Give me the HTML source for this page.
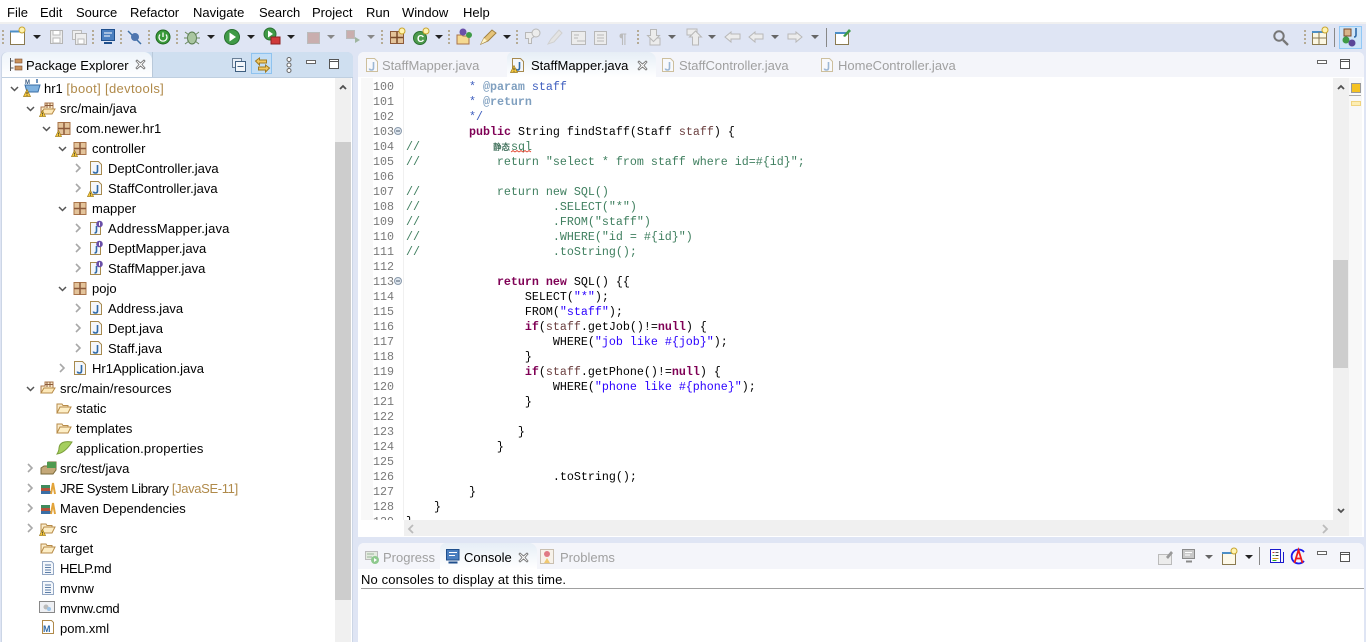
<!DOCTYPE html>
<html>
<head>
<meta charset="utf-8">
<title>Eclipse</title>
<style>
html,body{margin:0;padding:0;width:1366px;height:642px;overflow:hidden;background:#dfe5f4;font-family:"Liberation Sans","Noto Sans CJK SC",sans-serif;font-size:13px;color:#000}
div,span.a,svg.a{position:absolute}
.t{position:absolute;white-space:pre;height:20px;line-height:20px}
.g{color:#a0a0a0}
.d{color:#b08a4a}
.c{position:absolute;white-space:pre;font-family:"Liberation Mono",monospace;font-size:11.67px;line-height:15px;height:15px;left:406px;color:#000}
.n{position:absolute;white-space:pre;font-family:"Liberation Mono",monospace;font-size:11.67px;line-height:15px;height:15px;left:373px;color:#787878}
.k{color:#7f0055;font-weight:bold}
.s{color:#2a00ff}
.m{color:#3f7f5f}
.j{color:#3f5fbf}
.h{color:#7f9fbf;font-weight:bold}
.v{color:#6a3e3e}
svg{overflow:visible}
</style>
</head>
<body>
<svg width="0" height="0" style="position:absolute">
<defs>
<symbol id="jf" viewBox="0 0 16 16"><path d="M2.500 1.500h8l3 3v10h-11z" fill="#f4f7fb" stroke="#a78a4e"/><path d="M9.500 5v6q0 2-2 2t-2-1.500" fill="none" stroke="#2f6aa8" stroke-width="1.600"/></symbol>
<symbol id="jg" viewBox="0 0 16 16"><path d="M2.500 1.500h8l3 3v10h-11z" fill="#f8f9fc" stroke="#cdbf9d"/><path d="M9.500 5v6q0 2-2 2t-2-1.500" fill="none" stroke="#9db7d4" stroke-width="1.600"/></symbol>
<symbol id="pk" viewBox="0 0 16 16"><path d="M2 2.500h12v12H2z" fill="#e3c39a" stroke="#a9744a"/><path d="M8 2.500v12M2 8.500h12" stroke="#8c5a3a" stroke-width="1.500"/></symbol>
<symbol id="wr" viewBox="0 0 8 8"><path d="M4 .5l3.500 7H.5z" fill="#f7c83c" stroke="#9a7a1e" stroke-width=".7"/><path d="M4 3v2.300M4 6v.8" stroke="#333" stroke-width=".9"/></symbol>
<symbol id="fo" viewBox="0 0 16 16"><path d="M1 13V4h5l1 1.500h5V8" fill="#fbeccb" stroke="#b78b48"/><path d="M1 13l3-6h11l-3 6z" fill="#fdeec6" stroke="#b78b48"/></symbol>
<symbol id="pf" viewBox="0 0 16 16"><path d="M1 13V6h4V2h8v6" fill="#fbeccb" stroke="#a9744a"/><path d="M7 2v5M10 2v5M5 4.500h8" stroke="#8c5a3a"/><path d="M1 13l3-5h11l-3 5z" fill="#fde8b8" stroke="#b78b48"/></symbol>
<symbol id="if" viewBox="0 0 16 16"><path d="M2.500 2.500h10v12h-10z" fill="#f4f7fb" stroke="#a78a4e"/><path d="M8.500 6v5q0 2-2 2" fill="none" stroke="#2f6aa8" stroke-width="1.600"/><circle cx="11.500" cy="4" r="3.300" fill="#6a4fa8"/><path d="M11.500 2.300v3.400" stroke="#fff"/></symbol>
<symbol id="lib" viewBox="0 0 16 16"><path d="M1 5h9v3H1z" fill="#3f8a5c"/><path d="M1 8h9v3H1z" fill="#b5533c"/><path d="M1 11h10v3H1z" fill="#3a6ea5"/><path d="M11 14l2-11 2 11" fill="none" stroke="#e3a43a" stroke-width="2"/></symbol>
<symbol id="tx" viewBox="0 0 16 16"><path d="M2.500 1.500h9l2 2v11h-11z" fill="#f4f7fb" stroke="#94a8c4"/><path d="M5 5h6M5 7.500h6M5 10h6M5 12.500h6" stroke="#5c7ea8"/></symbol>
<symbol id="dd" viewBox="0 0 8 4"><path d="M0 0h8L4 4z"/></symbol>
<symbol id="x" viewBox="0 0 11 11"><path d="M2 1l3.500 3L9 1l1 1-3 3.500 3 3.500-1 1-3.500-3-3.500 3-1-1 3-3.500-3-3.500z" fill="#fff" stroke="#777" stroke-width=".9"/></symbol>
<symbol id="min" viewBox="0 0 10 4"><rect x=".5" y=".5" width="9" height="3" fill="#fff" stroke="#666"/></symbol>
<symbol id="max" viewBox="0 0 10 10"><rect x=".5" y=".5" width="9" height="9" fill="#fff" stroke="#555"/><path d="M0 2.500h10" stroke="#555"/></symbol>
</defs>
</svg>

<!-- menu -->
<div style="left:0;top:0;width:1366px;height:22px;background:#fff"></div>
<div style="left:0;top:22px;width:1366px;height:2px;background:#f0f0f0"></div>
<span class="t" style="left:7px;top:3px">File</span>
<span class="t" style="left:40px;top:3px">Edit</span>
<span class="t" style="left:76px;top:3px">Source</span>
<span class="t" style="left:130px;top:3px">Refactor</span>
<span class="t" style="left:193px;top:3px">Navigate</span>
<span class="t" style="left:259px;top:3px">Search</span>
<span class="t" style="left:312px;top:3px">Project</span>
<span class="t" style="left:366px;top:3px">Run</span>
<span class="t" style="left:402px;top:3px">Window</span>
<span class="t" style="left:463px;top:3px">Help</span>

<!-- toolbar icons -->
<svg class="a" style="left:0;top:24px" width="1366" height="28">
<g stroke="#b5ab95" stroke-width="2" stroke-dasharray="2 2"><path d="M3 6v15M93 6v15M121 6v15M149 6v15M177 6v15M382 6v15M449 6v15M517 6v15M638 6v15M1305 6v15"/></g>
<path d="M826.500 4v19M1334.500 4v19" stroke="#888"/>
<!-- new -->
<path d="M10.500 7.500h14v13h-14z" fill="#fff" stroke="#8a7a50"/><path d="M10 7.500h14" stroke="#4d8fc7" stroke-width="2"/><circle cx="22" cy="6" r="3" fill="#fff3b0" stroke="#c8a52e"/>
<!-- save -->
<path d="M50.500 6.500h12v13h-12z" fill="#eee" stroke="#b4b4b4"/><path d="M53 7v4h7V7M53 14h7v5h-7z" fill="#fff" stroke="#bbb"/>
<path d="M72.500 6.500h9v9h-9z" fill="#eee" stroke="#bbb"/><path d="M75.500 9.500h11v11h-11z" fill="#eee" stroke="#b4b4b4"/><path d="M78 15h6v5h-6z" fill="#fff" stroke="#bbb"/>
<!-- console -->
<path d="M101.500 5.500h13v11h-13z" fill="#4a7fc0" stroke="#1f4f8c"/><path d="M104 9h8M104 12h6" stroke="#fff"/><path d="M104 19h8" stroke="#1f4f8c" stroke-width="2"/>
<!-- skip -->
<path d="M128 7l13 13" stroke="#3c6ea5" stroke-width="1.500"/><circle cx="135" cy="13" r="4" fill="#4f76b0"/>
<!-- spring -->
<circle cx="163" cy="13" r="7" fill="#3a9a3a" stroke="#206620"/><path d="M160 10.500a4 4 0 1 0 6 0M163 8.500v4.500" fill="none" stroke="#fff" stroke-width="1.300"/>
<!-- bug -->
<ellipse cx="192" cy="14" rx="4.500" ry="6" fill="#a9c6a0" stroke="#55794c"/><path d="M185 8l4 3M199 8l-4 3M184 14h4M200 14h-4M185 20l4-3M199 20l-4-3" stroke="#6b8a5e"/>
<!-- run -->
<circle cx="232" cy="13" r="7.500" fill="#3f9a46" stroke="#2a7030"/><path d="M229.500 8.500l6.500 4.500-6.500 4.500z" fill="#fff"/>
<circle cx="270" cy="10" r="6" fill="#3f9a46" stroke="#2a7030"/><path d="M268 6.500l5 3.500-5 3.500z" fill="#fff"/><rect x="271" y="13" width="9" height="7" fill="#d03a3a" stroke="#8c2020"/>
<!-- stop -->
<rect x="307.500" y="8.500" width="12" height="11" fill="#c9aeae" stroke="#bbb"/>
<rect x="346.500" y="6.500" width="8" height="8" fill="#c9aeae" stroke="#bbb"/><path d="M355 13l5 3-5 3z" fill="#9fb59f"/>
<!-- new pkg -->
<rect x="390.500" y="7.500" width="13" height="12" fill="#e3c39a" stroke="#8c5a3a"/><path d="M397 8v11M391 13.500h12" stroke="#7a4a2a" stroke-width="1.500"/><circle cx="402" cy="7" r="3" fill="#fff3b0" stroke="#c8a52e"/>
<circle cx="420" cy="14" r="6.500" fill="#4d9a4d" stroke="#2a7030"/><text x="417" y="18" font-size="10" font-weight="bold" fill="#fff" font-family="Liberation Sans">C</text><circle cx="426" cy="7" r="3" fill="#fff3b0" stroke="#c8a52e"/>
<!-- open type -->
<path d="M457 20v-9h5l1 1h6v8z" fill="#f5d991" stroke="#a9744a"/><circle cx="463" cy="8" r="3.500" fill="#6a4fa8"/><circle cx="469" cy="11" r="3" fill="#3f9a46"/>
<path d="M481 20l3-6 8-8 4 3-8 8z" fill="#e6c47a" stroke="#a08040"/><path d="M481 20l3-6 3 3z" fill="#fff6c8"/>
<!-- grey -->
<g fill="#ececec" stroke="#b8b8b8"><path d="M525.500 8.500h8l2 3-4 3v5h-3v-5h-3z"/><circle cx="536" cy="9" r="4"/><path d="M548 20l3-5 8-9 3 3-8 9z" fill="#e4e4e4" stroke="#d0d0d0"/><path d="M571.500 7.500h14v13h-14z"/><path d="M574 11h5M574 14h4M577 17h8"/><path d="M594.500 7.500h12v13h-12z"/><path d="M597 11h7M597 14h7M597 17h7"/><path d="M650 14h10v7h-10z"/><path d="M650.500 5.500h6v6h3l-6 6-6-6h3z"/><path d="M687 5h10v6h-10z"/><path d="M692.500 21v-8h-3l6-6 6 6h-3v8z"/><path d="M731 8l-6 5 6 5v-3h9v-5h-9z"/><path d="M755 8l-6 5 6 5v-3h8v-5h-8z"/><path d="M796 8l6 5-6 5v-3h-8v-5h8z"/></g>
<text x="619" y="19" font-size="14" font-weight="bold" fill="#bbb" font-family="Liberation Sans">¶</text>
<!-- open task -->
<path d="M835.500 8.500h13v12h-13z" fill="#fff" stroke="#8a7a50"/><path d="M835 9h13" stroke="#4d8fc7" stroke-width="2"/><path d="M843 12l6-7 2 2-6 6z" fill="#3f9a46"/>
<!-- search -->
<circle cx="1279" cy="12" r="4.700" fill="none" stroke="#777" stroke-width="2"/><path d="M1283 16l5 5" stroke="#777" stroke-width="2.300"/>
<path d="M1312.500 7.500h14v13h-14z" fill="#fbf7e3" stroke="#8a7a50"/><path d="M1312 8h14" stroke="#4d8fc7" stroke-width="2"/><path d="M1312 14h14M1319 8v12" stroke="#8a7a50"/><circle cx="1325" cy="6" r="3" fill="#fff3b0" stroke="#c8a52e"/>
<!-- active perspective -->
<rect x="1339.500" y="2.500" width="22" height="22" fill="#cde4f7" stroke="#90c8f6"/>
<rect x="1344" y="5" width="7" height="7" fill="#d8b48a" stroke="#7a4a2a"/><circle cx="1346" cy="16" r="3.500" fill="#3f9a46"/><circle cx="1352" cy="19" r="3.500" fill="#5a4598"/><path d="M1356 4v7q0 2-2 2" fill="none" stroke="#2f6aa8" stroke-width="1.600"/>
</svg>
<svg class="a" style="left:0;top:35px" width="900" height="6">
<use href="#dd" x="33" y="0" width="8" height="4" fill="#222"/>
<use href="#dd" x="207" y="0" width="8" height="4" fill="#222"/>
<use href="#dd" x="247" y="0" width="8" height="4" fill="#222"/>
<use href="#dd" x="287" y="0" width="8" height="4" fill="#222"/>
<use href="#dd" x="327" y="0" width="8" height="4" fill="#888"/>
<use href="#dd" x="367" y="0" width="8" height="4" fill="#888"/>
<use href="#dd" x="435" y="0" width="8" height="4" fill="#222"/>
<use href="#dd" x="503" y="0" width="8" height="4" fill="#222"/>
<use href="#dd" x="668" y="0" width="8" height="4" fill="#666"/>
<use href="#dd" x="708" y="0" width="8" height="4" fill="#666"/>
<use href="#dd" x="771" y="0" width="8" height="4" fill="#666"/>
<use href="#dd" x="811" y="0" width="8" height="4" fill="#666"/>
</svg>

<!-- left panel -->
<div style="left:1px;top:52px;width:352px;height:590px;background:#fff;border-radius:6px 6px 0 0;border:1px solid #ccd6e6;border-bottom:0;box-sizing:border-box"></div>
<div style="left:2px;top:52px;width:351px;height:25px;background:#cfdff0;border-radius:6px 6px 0 0"></div>
<div style="left:2px;top:52px;width:150px;height:26px;background:linear-gradient(#eef4fa,#fff);border-radius:6px 8px 0 0"></div>
<div style="left:2px;top:77px;width:351px;height:1px;background:#bfcfe0"></div>
<div style="left:152px;top:52px;width:1px;height:25px;background:#b9c9da"></div>
<svg class="a" style="left:9px;top:58px" width="14" height="14"><path d="M1.500 0v13M1.500 3h3M1.500 10h3" stroke="#555" fill="none"/><rect x="6" y="1" width="7" height="4" fill="#c9925c" stroke="#7a4a2a" stroke-width=".6"/><rect x="6" y="8" width="7" height="4" fill="#c9925c" stroke="#7a4a2a" stroke-width=".6"/></svg>
<span class="t" style="left:26px;top:56px">Package Explorer</span>
<svg class="a" style="left:135px;top:59px" width="11" height="11"><use href="#x" width="11" height="11"/></svg>
<svg class="a" style="left:232px;top:58px" width="14" height="14"><rect x=".5" y=".5" width="9" height="9" fill="#e8eef6" stroke="#6a7f96"/><rect x="3.500" y="3.500" width="10" height="10" fill="#f3f6fa" stroke="#3f5f80"/><path d="M5.500 8.500h6" stroke="#3f5f80"/></svg>
<div style="left:251px;top:53px;width:21px;height:21px;background:#c3def6;border:1px solid #8fc3ef;box-sizing:border-box"></div>
<svg class="a" style="left:255px;top:57px" width="15" height="16"><path d="M.5 4l4-3v2h7v3h-7v2zM14.500 11l-4-3v2h-7v3h7v2z" fill="#f2c860" stroke="#a07a20"/></svg>
<svg class="a" style="left:285px;top:57px" width="8" height="16"><circle cx="4" cy="2.500" r="2" fill="#fff" stroke="#666"/><circle cx="4" cy="8" r="2" fill="#fff" stroke="#666"/><circle cx="4" cy="13.500" r="2" fill="#fff" stroke="#666"/></svg>
<svg class="a" style="left:306px;top:60px" width="10" height="4"><use href="#min" width="10" height="4"/></svg>
<svg class="a" style="left:329px;top:59px" width="10" height="10"><use href="#max" width="10" height="10"/></svg>

<!-- left scrollbar -->
<div style="left:335px;top:78px;width:16px;height:564px;background:#f0f0f0"></div>
<div style="left:335px;top:142px;width:16px;height:458px;background:#cdcdcd"></div>
<svg class="a" style="left:339px;top:84px" width="8" height="6"><path d="M1 5l3-3 3 3" fill="none" stroke="#505050" stroke-width="1.800"/></svg>

<!-- tree -->
<svg class="a" style="left:0;top:78px" width="335" height="564">
<g fill="none" stroke="#555" stroke-width="1.500"><path d="M11 9l3.500 3.500L18 9M27 29l3.500 3.500L34 29M43 49l3.500 3.500L50 49M59 69l3.500 3.500L66 69M59 129l3.500 3.500L66 129M59 209l3.500 3.500L66 209M27 309l3.500 3.500L34 309"/></g>
<g fill="none" stroke="#a8a8a8" stroke-width="1.600"><path d="M76 86l4 4-4 4M76 106l4 4-4 4M76 146l4 4-4 4M76 166l4 4-4 4M76 186l4 4-4 4M76 226l4 4-4 4M76 246l4 4-4 4M76 266l4 4-4 4M60 286l4 4-4 4M28 386l4 4-4 4M28 406l4 4-4 4M28 426l4 4-4 4M28 446l4 4-4 4"/></g>
<!-- hr1 -->
<path d="M25 7h15l-2 7h-11z" fill="#7fb2e0" stroke="#3a6ea5"/><text x="25" y="6" font-size="6" font-weight="bold" fill="#3a5a80" font-family="Liberation Sans">M</text><path d="M37 1v4" stroke="#3a6ea5" stroke-width="1.500"/>
<use href="#wr" x="23" y="11" width="8" height="8"/>
<g transform="translate(0,-1)">
<use href="#pf" x="40" y="24" width="16" height="16"/><use href="#wr" x="39" y="33" width="7" height="7"/>
<use href="#pk" x="56" y="43" width="16" height="16"/><use href="#wr" x="55" y="53" width="7" height="7"/>
<use href="#pk" x="72" y="63" width="16" height="16"/><use href="#wr" x="71" y="73" width="7" height="7"/>
<use href="#jf" x="88" y="83" width="16" height="16"/>
<use href="#jf" x="88" y="103" width="16" height="16"/><use href="#wr" x="87" y="113" width="7" height="7"/>
<use href="#pk" x="72" y="123" width="16" height="16"/>
<use href="#if" x="88" y="143" width="16" height="16"/>
<use href="#if" x="88" y="163" width="16" height="16"/>
<use href="#if" x="88" y="183" width="16" height="16"/>
<use href="#pk" x="72" y="203" width="16" height="16"/>
<use href="#jf" x="88" y="223" width="16" height="16"/>
<use href="#jf" x="88" y="243" width="16" height="16"/>
<use href="#jf" x="88" y="263" width="16" height="16"/>
<use href="#jf" x="72" y="283" width="16" height="16"/>
<use href="#pf" x="40" y="303" width="16" height="16"/>
<use href="#fo" x="56" y="323" width="16" height="16"/>
<use href="#fo" x="56" y="343" width="16" height="16"/>
<path d="M57 377q8-1 15-12q-12-2-13 6q0 3-2 6z" fill="#a5cf5e" stroke="#7a9e3a"/>
<path d="M41 397v-6l3-2h4v-4h8v8l-3 4z" fill="#c4a878" stroke="#7a6a3a"/><path d="M47 385h9v6h-9z" fill="#4f9a4f"/>
<use href="#lib" x="40" y="403" width="16" height="16"/>
<use href="#lib" x="40" y="423" width="16" height="16"/>
<use href="#fo" x="40" y="443" width="16" height="16"/><use href="#wr" x="39" y="452" width="7" height="7"/>
<use href="#fo" x="40" y="463" width="16" height="16"/>
<use href="#tx" x="40" y="483" width="16" height="16"/>
<use href="#tx" x="40" y="503" width="16" height="16"/>
<rect x="39.500" y="524.500" width="15" height="11" fill="#eef0f4" stroke="#888"/><circle cx="46" cy="530" r="2.500" fill="#bbb"/><circle cx="49" cy="532" r="2" fill="#9cc4e8"/>
<path d="M42.500 543.500h9l2 2v11h-11z" fill="#fff" stroke="#b08a4a"/><text x="43" y="555" font-size="9" font-weight="bold" fill="#2f6aa8" font-family="Liberation Sans">M</text>
</g>
</svg>
<div style="left:0;top:1px;width:335px;height:641px">
<span class="t" style="left:44px;top:78px">hr1 <span class="d" style="letter-spacing:.35px">[boot] [devtools]</span></span>
<span class="t" style="left:60px;top:98px">src/main/java</span>
<span class="t" style="left:76px;top:118px">com.newer.hr1</span>
<span class="t" style="left:92px;top:138px">controller</span>
<span class="t" style="left:108px;top:158px">DeptController.java</span>
<span class="t" style="left:108px;top:178px">StaffController.java</span>
<span class="t" style="left:92px;top:198px">mapper</span>
<span class="t" style="left:108px;top:218px;letter-spacing:.17px">AddressMapper.java</span>
<span class="t" style="left:108px;top:238px">DeptMapper.java</span>
<span class="t" style="left:108px;top:258px">StaffMapper.java</span>
<span class="t" style="left:92px;top:278px">pojo</span>
<span class="t" style="left:108px;top:298px">Address.java</span>
<span class="t" style="left:108px;top:318px">Dept.java</span>
<span class="t" style="left:108px;top:338px">Staff.java</span>
<span class="t" style="left:92px;top:358px">Hr1Application.java</span>
<span class="t" style="left:60px;top:378px;letter-spacing:.1px">src/main/resources</span>
<span class="t" style="left:76px;top:398px">static</span>
<span class="t" style="left:76px;top:418px">templates</span>
<span class="t" style="left:76px;top:438px;letter-spacing:.18px">application.properties</span>
<span class="t" style="left:60px;top:458px">src/test/java</span>
<span class="t" style="left:60px;top:478px;letter-spacing:-.35px">JRE System Library <span class="d">[JavaSE-11]</span></span>
<span class="t" style="left:60px;top:498px">Maven Dependencies</span>
<span class="t" style="left:60px;top:518px">src</span>
<span class="t" style="left:60px;top:538px">target</span>
<span class="t" style="left:60px;top:558px;letter-spacing:-.4px">HELP.md</span>
<span class="t" style="left:60px;top:578px">mvnw</span>
<span class="t" style="left:60px;top:598px;letter-spacing:-.25px">mvnw.cmd</span>
<span class="t" style="left:60px;top:618px">pom.xml</span>
</div>

<!-- editor panel -->
<div style="left:358px;top:52px;width:1006px;height:485px;background:#fff;border-radius:6px 6px 0 0;overflow:hidden"></div>
<div style="left:358px;top:52px;width:1006px;height:25px;background:#f4f5fa;border-radius:6px 6px 0 0"></div>
<div style="left:507px;top:52px;width:149px;height:26px;background:linear-gradient(#e6eef6,#fff);border-radius:6px 8px 0 0"></div>
<svg class="a" style="left:364px;top:57px" width="16" height="16"><use href="#jg" width="16" height="16"/></svg>
<span class="t g" style="left:382px;top:56px">StaffMapper.java</span>
<svg class="a" style="left:510px;top:57px" width="16" height="16"><use href="#jf" width="16" height="16"/><use href="#wr" x="0" y="8" width="8" height="8"/></svg>
<span class="t" style="left:531px;top:56px">StaffMapper.java</span>
<svg class="a" style="left:637px;top:60px" width="11" height="11"><use href="#x" width="11" height="11"/></svg>
<svg class="a" style="left:660px;top:57px" width="16" height="16"><use href="#jg" width="16" height="16"/></svg>
<span class="t g" style="left:679px;top:56px">StaffController.java</span>
<svg class="a" style="left:819px;top:57px" width="16" height="16"><use href="#jg" width="16" height="16"/></svg>
<span class="t g" style="left:838px;top:56px">HomeController.java</span>
<svg class="a" style="left:1317px;top:60px" width="10" height="4"><use href="#min" width="10" height="4"/></svg>
<svg class="a" style="left:1340px;top:59px" width="10" height="10"><use href="#max" width="10" height="10"/></svg>

<!-- gutter -->
<div style="left:361px;top:78px;width:12px;height:442px;background:#f8f8f8"></div>
<div style="left:403px;top:78px;width:1px;height:442px;background:#f0f0f0"></div>

<!-- code -->
<div style="left:358px;top:78px;width:975px;height:442px;overflow:hidden">
<div style="left:-358px;top:-77px;width:1333px;height:520px">
<span class="n" style="top:79px">100</span><span class="c j" style="top:79px">         * <span class="h">@param</span> staff</span>
<span class="n" style="top:94px">101</span><span class="c j" style="top:94px">         * <span class="h">@return</span></span>
<span class="n" style="top:109px">102</span><span class="c j" style="top:109px">         */</span>
<span class="n" style="top:124px">103</span><span class="c" style="top:124px">         <span class="k">public</span> String findStaff(Staff <span class="v">staff</span>) {</span>
<span class="n" style="top:139px">104</span><span class="c m" style="top:139px">//</span>
<span class="a" style="left:493px;top:139px;line-height:15px;white-space:pre;font-family:'Noto Sans CJK SC',sans-serif;font-size:8.500px;color:#3f6f5a;font-weight:bold">静态</span>
<span class="c m" style="top:139px;left:511px">sql</span>
<span class="n" style="top:154px">105</span><span class="c m" style="top:154px">//           return "select * from staff where id=#{id}";</span>
<span class="n" style="top:169px">106</span>
<span class="n" style="top:184px">107</span><span class="c m" style="top:184px">//           return new SQL()</span>
<span class="n" style="top:199px">108</span><span class="c m" style="top:199px">//                   .SELECT("*")</span>
<span class="n" style="top:214px">109</span><span class="c m" style="top:214px">//                   .FROM("staff")</span>
<span class="n" style="top:229px">110</span><span class="c m" style="top:229px">//                   .WHERE("id = #{id}")</span>
<span class="n" style="top:244px">111</span><span class="c m" style="top:244px">//                   .toString();</span>
<span class="n" style="top:259px">112</span>
<span class="n" style="top:274px">113</span><span class="c" style="top:274px">             <span class="k">return</span> <span class="k">new</span> SQL() {{</span>
<span class="n" style="top:289px">114</span><span class="c" style="top:289px">                 SELECT(<span class="s">"*"</span>);</span>
<span class="n" style="top:304px">115</span><span class="c" style="top:304px">                 FROM(<span class="s">"staff"</span>);</span>
<span class="n" style="top:319px">116</span><span class="c" style="top:319px">                 <span class="k">if</span>(<span class="v">staff</span>.getJob()!=<span class="k">null</span>) {</span>
<span class="n" style="top:334px">117</span><span class="c" style="top:334px">                     WHERE(<span class="s">"job like #{job}"</span>);</span>
<span class="n" style="top:349px">118</span><span class="c" style="top:349px">                 }</span>
<span class="n" style="top:364px">119</span><span class="c" style="top:364px">                 <span class="k">if</span>(<span class="v">staff</span>.getPhone()!=<span class="k">null</span>) {</span>
<span class="n" style="top:379px">120</span><span class="c" style="top:379px">                     WHERE(<span class="s">"phone like #{phone}"</span>);</span>
<span class="n" style="top:394px">121</span><span class="c" style="top:394px">                 }</span>
<span class="n" style="top:409px">122</span>
<span class="n" style="top:424px">123</span><span class="c" style="top:424px">                }</span>
<span class="n" style="top:439px">124</span><span class="c" style="top:439px">             }</span>
<span class="n" style="top:454px">125</span>
<span class="n" style="top:469px">126</span><span class="c" style="top:469px">                     .toString();</span>
<span class="n" style="top:484px">127</span><span class="c" style="top:484px">         }</span>
<span class="n" style="top:499px">128</span><span class="c" style="top:499px">    }</span>
<span class="n" style="top:514px">129</span><span class="c" style="top:514px">}</span>
</div>
</div>
<svg class="a" style="left:511px;top:150px" width="22" height="3"><path d="M0 2l2-1.500 2 1.500 2-1.500 2 1.500 2-1.500 2 1.500 2-1.500 2 1.500 2-1.500 2 1.500" fill="none" stroke="#e0452e" stroke-width=".8"/></svg>
<svg class="a" style="left:393px;top:126px" width="10" height="10"><circle cx="5" cy="5" r="3.500" fill="#dfe6ee" stroke="#8a9aac"/><path d="M3 5h4" stroke="#4a5a6c"/></svg>
<svg class="a" style="left:393px;top:276px" width="10" height="10"><circle cx="5" cy="5" r="3.500" fill="#dfe6ee" stroke="#8a9aac"/><path d="M3 5h4" stroke="#4a5a6c"/></svg>

<!-- editor v scrollbar -->
<div style="left:1333px;top:78px;width:16px;height:442px;background:#f0f0f0"></div>
<div style="left:1333px;top:260px;width:15px;height:108px;background:#cdcdcd"></div>
<svg class="a" style="left:1337px;top:84px" width="8" height="6"><path d="M1 5l3-3 3 3" fill="none" stroke="#505050" stroke-width="1.800"/></svg>
<svg class="a" style="left:1337px;top:508px" width="8" height="6"><path d="M1 1l3 3 3-3" fill="none" stroke="#505050" stroke-width="1.800"/></svg>
<div style="left:1349px;top:78px;width:13px;height:458px;background:#f8f8f8"></div>
<div style="left:1351px;top:83px;width:8px;height:8px;background:#f5c221;border:1px solid #999"></div>
<div style="left:1349px;top:95px;width:12px;height:1px;background:#aaa"></div>
<div style="left:1351px;top:101px;width:8px;height:3px;background:#fdeeb4;border:1px solid #f0d480"></div>
<!-- editor h scrollbar -->
<div style="left:404px;top:520px;width:945px;height:16px;background:#f0f0f0"></div>
<svg class="a" style="left:407px;top:524px" width="8" height="10"><path d="M6 1L2 5l4 4" fill="none" stroke="#bbb" stroke-width="1.800"/></svg>
<svg class="a" style="left:1321px;top:524px" width="8" height="10"><path d="M2 1l4 4-4 4" fill="none" stroke="#bbb" stroke-width="1.800"/></svg>

<!-- console panel -->
<div style="left:358px;top:543px;width:1006px;height:99px;background:#fff;border-radius:6px 6px 0 0"></div>
<div style="left:358px;top:543px;width:1006px;height:26px;background:#f4f5fa;border-radius:6px 6px 0 0"></div>
<div style="left:440px;top:543px;width:97px;height:26px;background:linear-gradient(#e6eef6,#fff);border-radius:6px 8px 0 0"></div>
<svg class="a" style="left:365px;top:551px" width="15" height="14"><rect x=".5" y=".5" width="12" height="8" fill="#e4ebe0" stroke="#bbb"/><path d="M2 3h7M2 6h5" stroke="#9ab59a"/><circle cx="10" cy="9" r="4" fill="#8ec98e"/><path d="M9 7l3 2-3 2z" fill="#fff"/></svg>
<span class="t g" style="left:383px;top:548px">Progress</span>
<svg class="a" style="left:446px;top:549px" width="14" height="15"><path d="M.5 .5h12.500v10.500H.5z" fill="#4a7fc0" stroke="#1f4f8c"/><path d="M3 3.500h8M3 6.500h6" stroke="#fff"/><path d="M2.500 13.500h9" stroke="#1f4f8c" stroke-width="2"/></svg>
<span class="t" style="left:464px;top:548px">Console</span>
<svg class="a" style="left:518px;top:552px" width="11" height="11"><use href="#x" width="11" height="11"/></svg>
<svg class="a" style="left:540px;top:549px" width="15" height="15"><path d="M.5 .5h13v14H.5z" fill="#f7f2ea" stroke="#c9bfb0"/><circle cx="7" cy="5" r="3" fill="#e07a84"/><path d="M4 14l3-5 3 5z" fill="#f0c870"/></svg>
<span class="t g" style="left:560px;top:548px">Problems</span>
<svg class="a" style="left:1158px;top:549px" width="130" height="16">
<path d="M.5 5.500h13v10h-13z" fill="#ececec" stroke="#bbb"/><path d="M8 8l5-6 2 2-5 6z" fill="#999"/>
<path d="M24.500 .5h12v9h-12z" fill="#c8c8c8" stroke="#8a8a8a"/><path d="M27 3.500h7M27 6h5" stroke="#fff"/><path d="M28 12.500h6" stroke="#8a8a8a" stroke-width="2"/>
<use href="#dd" x="47" y="6" width="8" height="4" fill="#666"/>
<path d="M64.500 3.500h13v12h-13z" fill="#fdf9ea" stroke="#8a7a50"/><path d="M64 4h13" stroke="#4d8fc7" stroke-width="2"/><circle cx="76" cy="2" r="3" fill="#fff3b0" stroke="#c8a52e"/>
<use href="#dd" x="87" y="6" width="8" height="4" fill="#222"/>
<path d="M101.500 -2v18" stroke="#888"/>
</svg>
<svg class="a" style="left:1270px;top:549px" width="14" height="15"><path d="M.5 .5h10v13h-10z" fill="#fff" stroke="#1a1acc"/><path d="M3 13.500h10.500V3" fill="none" stroke="#1a1acc"/><path d="M2.500 3.500h2" stroke="#c33"/><path d="M5.500 3.500h3" stroke="#555"/><path d="M2.500 6.500h2" stroke="#4a4"/><path d="M5.500 6.500h3" stroke="#333"/><path d="M2.500 9.500h6" stroke="#c92"/><path d="M2.500 11.500h4" stroke="#2a2"/></svg>
<svg class="a" style="left:1290px;top:548px" width="17" height="17"><path d="M14 4a7 7 0 1 0 0 9" fill="none" stroke="#1a1aee" stroke-width="1.800"/><path d="M4.500 15l4-13 4 13M6 10.500h5" fill="none" stroke="#ee1a1a" stroke-width="1.800"/></svg>
<svg class="a" style="left:1317px;top:551px" width="10" height="4"><use href="#min" width="10" height="4"/></svg>
<svg class="a" style="left:1340px;top:552px" width="10" height="10"><use href="#max" width="10" height="10"/></svg>
<span class="t" style="left:361px;top:570px;letter-spacing:.14px">No consoles to display at this time.</span>
<div style="left:361px;top:588px;width:1003px;height:1px;background:#a0a0a0"></div>
</body>
</html>
